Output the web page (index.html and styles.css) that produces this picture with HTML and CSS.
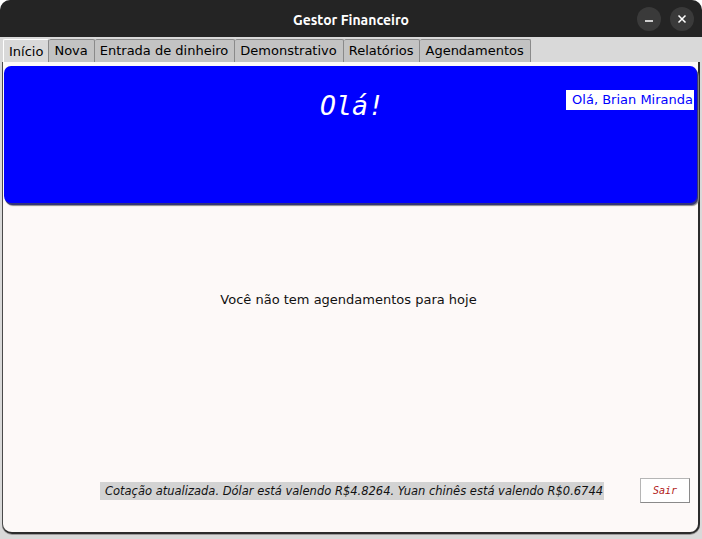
FILE: index.html
```html
<!DOCTYPE html>
<html>
<head>
<meta charset="utf-8">
<link rel="stylesheet" href="styles.css">
</head>
<body>
<div class="window">
  <div class="titlebar">
    <span class="title">Gestor Financeiro</span>
    <div class="controls">
      <span class="ctl"><svg width="10" height="10" viewBox="0 0 10 10"><line x1="1" y1="7" x2="9" y2="7" stroke="#fff" stroke-width="1.5"/></svg></span>
      <span class="ctl"><svg width="10" height="10" viewBox="0 0 10 10"><path d="M1.5 1.5 L8.5 8.5 M8.5 1.5 L1.5 8.5" stroke="#fff" stroke-width="1.5"/></svg></span>
    </div>
  </div>
  <div class="tabs">
    <span class="tab active">Início</span>
    <span class="tab">Nova</span>
    <span class="tab">Entrada de dinheiro</span>
    <span class="tab">Demonstrativo</span>
    <span class="tab">Relatórios</span>
    <span class="tab">Agendamentos</span>
  </div>
  <div class="page">
    <div class="hero">
      <div class="greet">Olá!</div>
      <div class="user">Olá, Brian Miranda</div>
    </div>
    <div class="body">
      <div class="empty">Você não tem agendamentos para hoje</div>
      <div class="footer">
        <span class="quote">Cotação atualizada. Dólar está valendo R$4.8264. Yuan chinês está valendo R$0.6744</span>
        <span class="sair">Sair</span>
      </div>
    </div>
  </div>
</div>
</body>
</html>
```
FILE: styles.css
```css
* { box-sizing: border-box; }
html, body { margin: 0; padding: 0; }
body {
  width: 702px;
  height: 539px;
  background: #ffffff;
  font-family: "DejaVu Sans", sans-serif;
  overflow: hidden;
}
.window {
  width: 702px;
  height: 539px;
  background: #d9d9d9;
  border-radius: 10px 10px 0 0;
  overflow: hidden;
  display: flex;
  flex-direction: column;
}
.titlebar {
  height: 37px;
  background: #242424;
  position: relative;
  display: flex;
  align-items: center;
  justify-content: center;
  flex-shrink: 0;
}
.title {
  color: #ffffff;
  font-family: "Ubuntu", "Open Sans", "DejaVu Sans", sans-serif;
  font-weight: bold;
  font-size: 14px;
  margin-top: 2px;
}
.controls {
  position: absolute;
  right: 8px;
  top: 7px;
  display: flex;
  gap: 9px;
}
.ctl {
  width: 24px;
  height: 24px;
  border-radius: 50%;
  background: #3a3a3a;
  display: flex;
  align-items: center;
  justify-content: center;
}
.tabs {
  height: 25px;
  display: flex;
  align-items: flex-end;
  padding-left: 3px;
  flex-shrink: 0;
}
.tab {
  height: 23px;
  padding: 0 6px 0 5px;
  font-size: 13px;
  line-height: 22px;
  color: #000;
  background: #c3c3c3;
  border: 1px solid #8a8a8a;
  border-bottom: none;
  border-left: none;
  border-radius: 2px 2px 0 0;
  white-space: nowrap;
}
.tab.active {
  background: #d9d9d9;
  height: 24px;
  margin-bottom: -1px;
  padding: 1px 5px 0 5px;
  border-left: 1px solid #ffffff;
  border-top-color: #ffffff;
}
.page {
  flex: 1;
  margin: 0 2px 5px 2px;
  background: #fdf9f8;
  border-right: 2px solid #2c2c2c;
  border-bottom: 2px solid #2c2c2c;
  border-left: 1px solid #4a4a4a;
  border-radius: 0 0 10px 10px;
  box-shadow: 0 1px 0 #9a9a9a;
  display: flex;
  flex-direction: column;
  padding-top: 4px;
}
.hero {
  height: 137px;
  margin: 0 1px 0 1px;
  background: #0000ff;
  border-radius: 7px;
  box-shadow: 1px 2px 0 #33337a, 2px 3px 1px #888888;
  position: relative;
  display: flex;
  justify-content: center;
}
.greet {
  color: #ffffff;
  font-family: "DejaVu Sans Mono", monospace;
  font-style: italic;
  font-size: 26.5px;
  margin-top: 24px;
  margin-left: 3px;
}
.user {
  position: absolute;
  right: 3px;
  top: 24px;
  background: #ffffff;
  color: #0000ff;
  font-size: 13px;
  line-height: 20px;
  height: 20px;
  padding: 0 1px 0 6px;
  white-space: nowrap;
}
.body {
  flex: 1;
  display: flex;
  flex-direction: column;
}
.empty {
  text-align: center;
  font-size: 13px;
  color: #111;
  margin-top: 89px;
  padding-right: 4px;
}
.footer {
  margin-top: auto;
  margin-bottom: 29px;
  display: flex;
  align-items: center;
  padding-left: 97px;
}
.quote {
  background: #d3d3d3;
  font-style: italic;
  font-size: 11.5px;
  height: 18px;
  line-height: 18px;
  padding: 0 1px 0 5px;
  color: #111;
  width: 504px;
  white-space: nowrap;
  overflow: hidden;
}
.sair {
  margin-left: 36px;
  width: 50px;
  height: 25px;
  background: #ffffff;
  border: 1px solid #b5b5b5;
  border-right-color: #8a8a8a;
  border-bottom-color: #8a8a8a;
  font-family: "DejaVu Sans Mono", monospace;
  font-style: italic;
  font-size: 10px;
  color: #b01515;
  display: flex;
  align-items: center;
  justify-content: center;
}
```
